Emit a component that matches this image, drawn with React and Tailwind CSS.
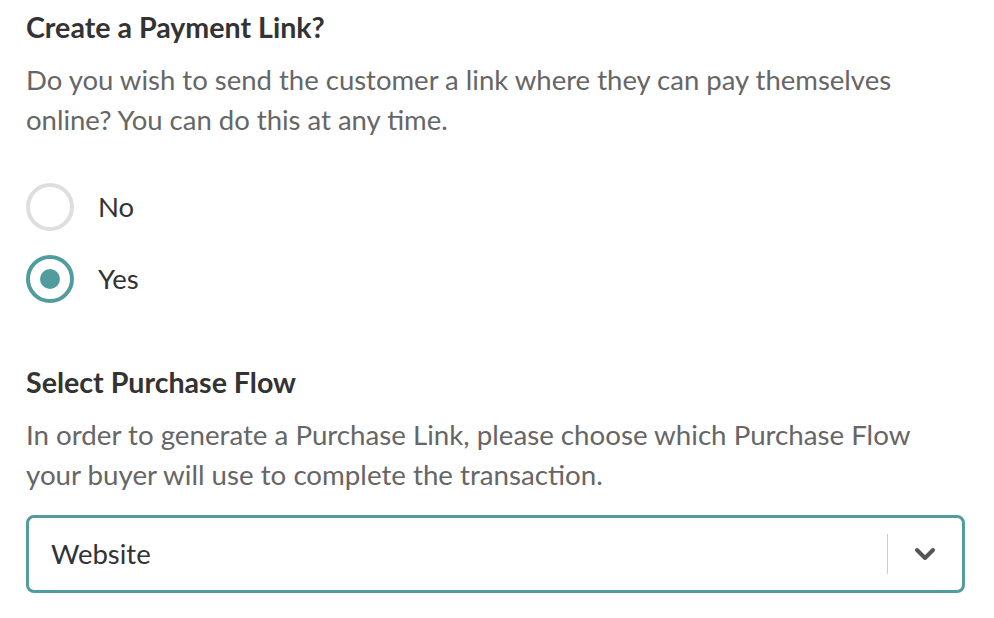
import React, { useState } from 'react';

const Radio = ({ checked, label, onClick }) => (
  <button type="button" onClick={onClick} className="flex items-center gap-[24px] h-[48px]">
    <span
      className={`w-[48px] h-[48px] rounded-full border-[4px] flex items-center justify-center bg-white ${
        checked ? 'border-[#529b9f]' : 'border-[#dedede]'
      }`}
    >
      {checked && <span className="w-[20px] h-[20px] rounded-full bg-[#529b9f]"></span>}
    </span>
    <span className="text-[27.5px] text-[#333333]">{label}</span>
  </button>
);

export default function App() {
  const [wantsLink, setWantsLink] = useState(true);

  return (
    <div className="min-h-screen bg-white px-[26px] pt-[11px] font-['Lato','Liberation_Sans',sans-serif]">
      {/* Payment link question */}
      <h2 className="text-[28.6px] leading-[32px] font-bold text-[#333333]">Create a Payment Link?</h2>
      <p className="mt-[17px] text-[27.5px] leading-[40px] text-[#666666] max-w-[910px]">
        Do you wish to send the customer a link where they can pay themselves online? You can do this at any time.
      </p>

      <div className="mt-[43px] flex flex-col gap-[24px] items-start">
        <Radio label="No" checked={!wantsLink} onClick={() => setWantsLink(false)} />
        <Radio label="Yes" checked={wantsLink} onClick={() => setWantsLink(true)} />
      </div>

      {/* Purchase flow */}
      <h2 className="mt-[63px] text-[28.6px] leading-[32px] font-bold text-[#333333]">Select Purchase Flow</h2>
      <p className="mt-[17px] text-[27.7px] leading-[40px] text-[#666666] max-w-[920px]">
        In order to generate a Purchase Link, please choose which Purchase Flow your buyer will use to complete the transaction.
      </p>

      <div className="mt-[20px] w-[939px] h-[78px] rounded-[8px] border-[3px] border-[#529b9f] flex items-center bg-white">
        <span className="flex-1 pl-[22px] text-[27.5px] text-[#333333]">Website</span>
        <span className="w-px h-[40px] bg-[#cccccc]"></span>
        <span className="w-[74px] flex items-center justify-center">
          <svg width="22" height="14" viewBox="0 0 22 14" fill="none">
            <path d="M3 3l8 8 8-8" stroke="#555555" strokeWidth="4" strokeLinecap="round" strokeLinejoin="round" />
          </svg>
        </span>
      </div>
    </div>
  );
}
